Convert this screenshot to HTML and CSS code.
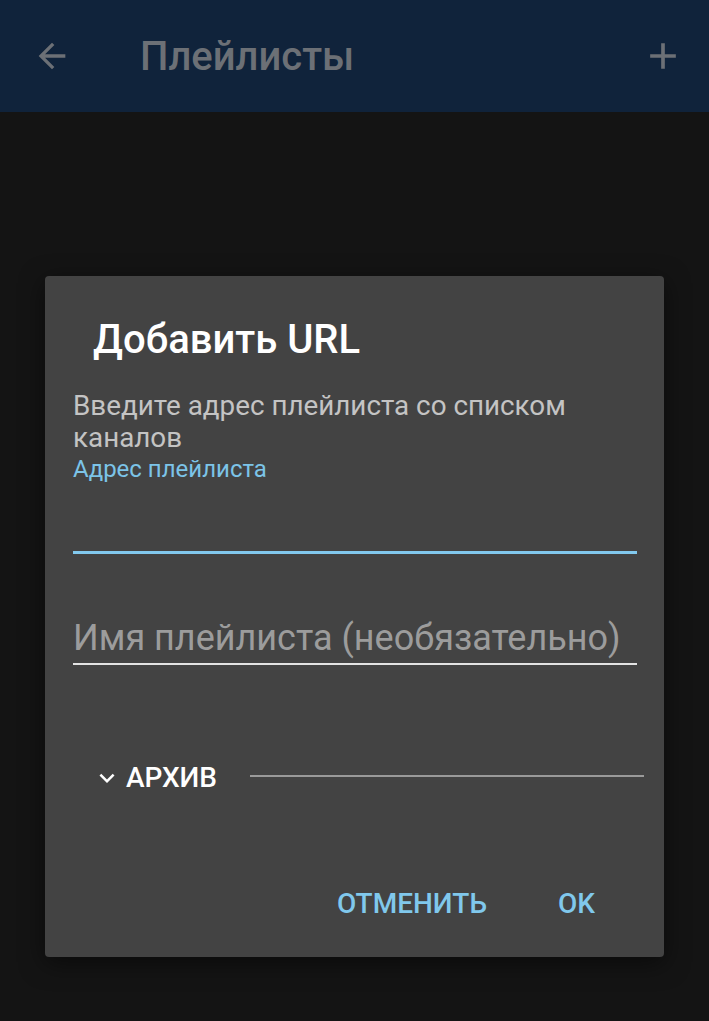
FILE: index.html
```html
<!DOCTYPE html>
<html lang="ru">
<head>
    <meta charset="UTF-8">
    <meta name="viewport" content="width=device-width, initial-scale=1.0">
    <title>Плейлисты</title>
    <link rel="stylesheet" href="styles.css">
</head>
<body>
    <header class="toolbar">
        <svg class="icon" width="36" height="36" viewBox="0 0 24 24">
            <path d="M20 11H7.83l5.59-5.59L12 4l-8 8 8 8 1.41-1.41L7.83 13H20v-2z" fill="currentColor"/>
        </svg>
        <h1 class="toolbar-title">Плейлисты</h1>
        <svg class="icon icon-add" width="36" height="36" viewBox="0 0 24 24">
            <path d="M19 13h-6v6h-2v-6H5v-2h6V5h2v6h6v2z" fill="currentColor"/>
        </svg>
    </header>

    <main class="content">
        <div class="dialog">
            <h2 class="dialog-title">Добавить URL</h2>
            <p class="dialog-text">Введите адрес плейлиста со списком каналов</p>

            <div class="field field-active">
                <label class="field-label">Адрес плейлиста</label>
                <input type="text" class="field-input">
            </div>

            <div class="field">
                <input type="text" class="field-input" placeholder="Имя плейлиста (необязательно)">
            </div>

            <div class="section">
                <svg class="chevron" width="30" height="30" viewBox="0 0 24 24">
                    <path d="M7.41 8.59L12 13.17l4.59-4.58L18 10l-6 6-6-6 1.41-1.41z" fill="currentColor"/>
                </svg>
                <span class="section-title">Архив</span>
                <span class="section-line"></span>
            </div>

            <div class="dialog-actions">
                <button class="btn">Отменить</button>
                <button class="btn">OK</button>
            </div>
        </div>
    </main>
</body>
</html>
```

FILE: styles.css
```css
* {
    margin: 0;
    padding: 0;
    box-sizing: border-box;
    font-family: Roboto, 'Noto Sans', sans-serif;
}
body {
    background-color: #141414;
    width: 709px;
    height: 1021px;
    overflow: hidden;
}
.toolbar {
    height: 112px;
    background-color: #10233b;
    display: flex;
    align-items: center;
    padding: 0 24px 0 32px;
    color: #6c7076;
}
.icon {
    width: 40px;
    height: 40px;
    display: block;
}
.toolbar-title {
    font-size: 40px;
    font-weight: 500;
    margin-left: 68px;
    margin-top: 1px;
    flex: 1;
    color: #6c7076;
}
.icon-add {
    width: 44px;
    height: 44px;
}

.content {
    padding-top: 164px;
    padding-left: 45px;
}
.dialog {
    width: 619px;
    height: 681px;
    background-color: #434343;
    border-radius: 4px;
    padding: 36px 28px 0 28px;
    box-shadow: 0 6px 24px rgba(0, 0, 0, 0.5);
}
.dialog-title {
    font-size: 40px;
    font-weight: 500;
    color: #ffffff;
    margin-left: 20px;
    line-height: 56px;
}
.dialog-text {
    margin-top: 22px;
    font-size: 27.8px;
    line-height: 32px;
    color: #c4c4c4;
    padding-right: 20px;
}

/* Поля ввода */
.field {
    width: 564px;
    border-bottom: 2px solid #e4e4e4;
}
.field-active {
    border-bottom: 3px solid #82c9ee;
    height: 100px;
}
.field-label {
    display: block;
    font-size: 24px;
    color: #7cc4e8;
    line-height: 30px;
}
.field-input {
    display: block;
    width: 100%;
    background: transparent;
    border: none;
    outline: none;
    font-size: 36px;
    color: #ffffff;
    height: 50px;
}
.field-active .field-input {
    margin-top: 12px;
    height: 44px;
}
.field + .field {
    margin-top: 59px;
}
.field-input::placeholder {
    color: #9c9c9c;
}

/* Архив */
.section {
    display: flex;
    align-items: center;
    margin-top: 96px;
    padding-left: 19px;
    color: #ffffff;
}
.chevron {
    width: 30px;
    height: 30px;
}
.section-title {
    font-size: 28px;
    font-weight: 500;
    text-transform: uppercase;
    margin-left: 4px;
}
.section-line {
    flex: 1;
    height: 2px;
    background-color: #9a9a9a;
    margin-left: 33px;
    margin-right: -8px;
    margin-top: -4px;
}

.dialog-actions {
    display: flex;
    justify-content: flex-end;
    gap: 71px;
    margin-top: 93px;
    padding-right: 41px;
}
.btn {
    background: none;
    border: none;
    font-size: 28px;
    font-weight: 500;
    color: #80c8ec;
    text-transform: uppercase;
    cursor: pointer;
}
```
